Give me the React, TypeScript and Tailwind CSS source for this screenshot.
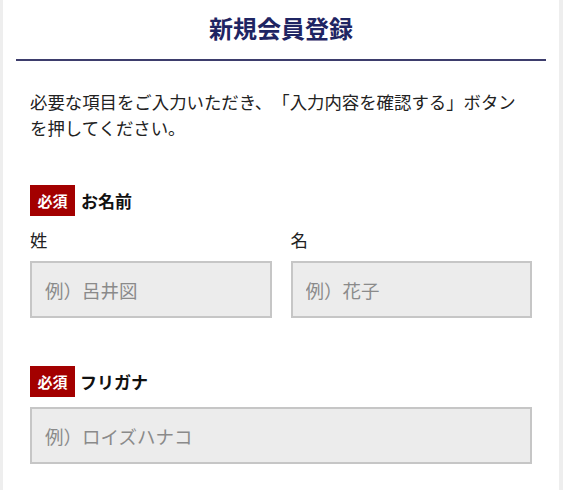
import React from "react";

const font = { fontFamily: '"Noto Sans CJK JP", "Noto Sans", sans-serif' };

function Badge() {
  return (
    <span className="flex h-[31px] w-[45px] items-center justify-center bg-[#a30000] text-[15px] font-bold leading-none text-white">
      必須
    </span>
  );
}

function Field({ placeholder }: { placeholder: string }) {
  return (
    <input
      type="text"
      placeholder={placeholder}
      className="h-[57px] w-full border-2 border-[#c6c6c6] bg-[#ececec] px-[13px] text-[18.5px] text-[#333] outline-none placeholder:text-[#8a8a8a]"
    />
  );
}

export default function App() {
  return (
    <div className="min-h-[490px] bg-[#eeeeee] pl-[3px] pr-[4px] [text-spacing-trim:space-all]" style={font}>
      <div className="min-h-[490px] bg-white px-[13px]">
        <div className="border-b-2 border-[#3d3d6c] pb-[13px] pt-[10px]">
          <h1 className="text-center text-[24px] font-bold leading-[36px] text-[#1f2563]">
            新規会員登録
          </h1>
        </div>
        <div className="px-[14px]">
          <p className="mt-[28px] text-[17.4px] leading-[26px] text-[#222]">
            必要な項目をご入力いただき、「入力内容を確認する」ボタンを押してください。
          </p>

          <div className="mt-[44px] flex items-center gap-[6px]">
            <Badge />
            <span className="text-[17px] font-bold text-[#111]">お名前</span>
          </div>
          <div className="mt-[12px] grid grid-cols-2 gap-x-[19px]">
            <div>
              <div className="mb-[9px] text-[17.4px] leading-[24px] text-[#222]">姓</div>
              <Field placeholder="例）呂井図" />
            </div>
            <div>
              <div className="mb-[9px] text-[17.4px] leading-[24px] text-[#222]">名</div>
              <Field placeholder="例）花子" />
            </div>
          </div>

          <div className="mt-[48px] flex items-center gap-[5px]">
            <Badge />
            <span className="text-[17px] font-bold text-[#111]">フリガナ</span>
          </div>
          <div className="mt-[10px]">
            <Field placeholder="例）ロイズハナコ" />
          </div>
        </div>
      </div>
    </div>
  );
}
